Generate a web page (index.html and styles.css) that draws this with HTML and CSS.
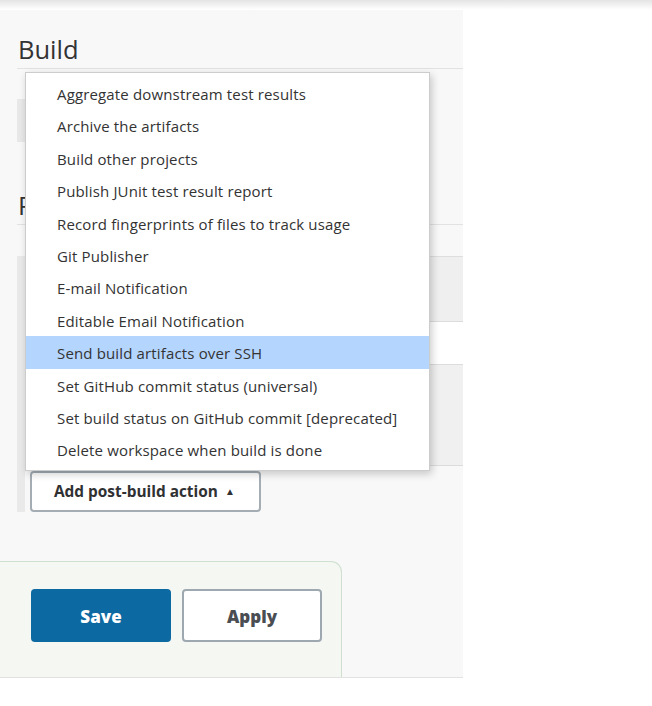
FILE: index.html
```html
<!DOCTYPE html>
<html>
<head>
<meta charset="utf-8">
<link rel="stylesheet" href="styles.css">
</head>
<body>
<div class="topshadow"></div>
<div class="panel">
  <h2 class="section-head">Build</h2>
  <div class="build-step"></div>
  <h2 class="section-head">Post-build Actions</h2>
  <div class="chunk">
    <div class="chunk-header"></div>
    <div class="chunk-input"></div>
    <div class="chunk-body"></div>
    <button class="add-btn">Add post-build action <span class="caret">&#9650;</span></button>
  </div>
  <div class="bottom-bar">
    <button class="btn btn-primary">Save</button>
    <button class="btn btn-secondary">Apply</button>
  </div>
</div>
<ul class="menu">
  <li>Aggregate downstream test results</li>
  <li>Archive the artifacts</li>
  <li>Build other projects</li>
  <li>Publish JUnit test result report</li>
  <li>Record fingerprints of files to track usage</li>
  <li>Git Publisher</li>
  <li>E-mail Notification</li>
  <li>Editable Email Notification</li>
  <li class="active">Send build artifacts over SSH</li>
  <li>Set GitHub commit status (universal)</li>
  <li>Set build status on GitHub commit [deprecated]</li>
  <li>Delete workspace when build is done</li>
</ul>
</body>
</html>
```
FILE: styles.css
```css
html, body {
  margin: 0;
  padding: 0;
  background: #ffffff;
  font-family: "Open Sans", "Noto Sans", sans-serif;
  color: #333333;
}

.topshadow {
  height: 10px;
  background: linear-gradient(to bottom, #e4e4e4 0%, #f2f2f2 50%, #ffffff 100%);
}

.panel {
  position: relative;
  width: 446px;
  height: 667px;
  padding-left: 17px;
  background: #f8f8f8;
  border-bottom: 1px solid #e2e2e2;
}

.section-head {
  margin: 0;
  padding-top: 25px;
  padding-bottom: 5px;
  padding-left: 1px;
  font-size: 25.5px;
  line-height: 28px;
  font-weight: 400;
  color: #333333;
  border-bottom: 1px solid #e2e2e2;
}

.build-step {
  margin-top: 30px;
  margin-bottom: 24px;
  height: 43px;
  width: 300px;
  background: #e8e8e8;
}

.chunk {
  margin-top: 31px;
  border-left: 8px solid #e9e9e9;
  display: flex;
  flex-direction: column;
}

.chunk-header {
  height: 64px;
  background: #efefef;
  border-top: 1px solid #dedede;
}

.chunk-input {
  height: 42px;
  background: #ffffff;
  border-top: 1px solid #dcdcdc;
}

.chunk-body {
  height: 100px;
  background: #f0f0f0;
  border-top: 1px solid #dcdcdc;
  border-bottom: 1px solid #dcdcdc;
}

.add-btn {
  align-self: flex-start;
  margin-top: 5px;
  margin-left: 5px;
  width: 231px;
  height: 41px;
  box-sizing: border-box;
  padding: 0 0 0 22px;
  text-align: left;
  background: #ffffff;
  border: 2px solid #a4adb4;
  border-radius: 4px;
  font-family: "Open Sans", "Noto Sans", sans-serif;
  font-size: 15.4px;
  font-weight: 700;
  color: #2f3133;
}

.caret {
  font-size: 10px;
  margin-left: 3px;
  vertical-align: 2px;
}

.bottom-bar {
  margin-top: 49px;
  margin-left: -17px;
  width: 310px;
  height: 88px;
  padding: 27px 0 0 31px;
  background: #f4f7f2;
  border-top: 1px solid #cfe0cf;
  border-right: 1px solid #cfe0cf;
  border-top-right-radius: 11px;
  display: flex;
  gap: 11px;
}

.btn {
  width: 140px;
  height: 53px;
  box-sizing: border-box;
  padding-top: 2px;
  border-radius: 4px;
  font-family: "Open Sans", "Noto Sans", sans-serif;
  font-size: 17px;
  font-weight: 800;
}

.btn-primary {
  background: #0d69a1;
  border: none;
  color: #ffffff;
}

.btn-secondary {
  background: #ffffff;
  border: 2px solid #9ea8b0;
  color: #4a4d52;
}

.menu {
  position: absolute;
  left: 25px;
  top: 72px;
  width: 403px;
  margin: 0;
  padding: 4px 0;
  list-style: none;
  background: #ffffff;
  border: 1px solid #cccccc;
  box-shadow: 2px 3px 8px rgba(0, 0, 0, 0.2);
}

.menu li {
  height: 32.4px;
  line-height: 34px;
  padding-left: 31px;
  font-size: 15px;
  letter-spacing: 0.15px;
  color: #333333;
  white-space: nowrap;
}

.menu li.active {
  background: #b4d5fe;
}
```
